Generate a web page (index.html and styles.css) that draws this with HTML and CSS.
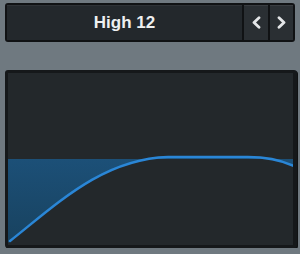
FILE: index.html
```html
<!DOCTYPE html>
<html lang="en">
  <head>
    <meta charset="UTF-8" />
    <title>EQ Band</title>
    <link rel="stylesheet" href="styles.css">
  </head>
  <body>
    <div class="bar">
      <div class="name">High 12</div>
      <button class="nav">
        <svg width="9" height="13" viewBox="0 0 9 13"><polyline points="7,1.8 2,6.5 7,11.2" /></svg>
      </button>
      <button class="nav">
        <svg width="9" height="13" viewBox="0 0 9 13"><polyline points="2,1.8 7,6.5 2,11.2" /></svg>
      </button>
    </div>

    <div class="graph">
      <svg class="curve" width="285" height="172" viewBox="0 0 285 172">
        <defs>
          <linearGradient id="fill" x1="0" y1="0" x2="0" y2="1">
            <stop offset="0" stop-color="#1c5078" />
            <stop offset="1" stop-color="#18425f" />
          </linearGradient>
        </defs>
        <!-- area between response and 0 dB line -->
        <path class="area" d="M0,86 L0,170 L2,168 C50,130 95,86 160,84 L240,84 C262,84 275,88 285,93 L285,86 Z" />
        <path class="line" d="M2,168 C50,130 95,86 160,84 L240,84 C262,84 275,88 286,93" />
      </svg>
    </div>
  </body>
</html>
```

FILE: styles.css
```css
* {
  margin: 0;
  padding: 0;
  box-sizing: border-box;
}

body {
  background: #6f7980;
  padding: 3px 4px 0 5px;
  font-family: "Liberation Sans", Arial, sans-serif;
}

.bar {
  display: flex;
  gap: 2px;
  width: 290px;
  height: 39px;
  border: 2px solid #101214;
  background: #101214;
  border-radius: 3px;
}

.name {
  flex: 1;
  display: flex;
  align-items: center;
  justify-content: center;
  background: #23282c;
  box-shadow: inset 0 1px 0 rgba(255, 255, 255, 0.05);
  color: #eef0f1;
  font-weight: bold;
  font-size: 17px;
}

.nav {
  display: flex;
  align-items: center;
  justify-content: center;
  width: 24px;
  border: none;
  background: #2a2f33;
  box-shadow: inset 0 1px 0 rgba(255, 255, 255, 0.07);
}

.nav:last-child {
  width: 23px;
}

.nav polyline {
  fill: none;
  stroke: #e4e6e8;
  stroke-width: 2.8;
  stroke-linecap: round;
  stroke-linejoin: round;
}

.graph {
  margin-top: 28px;
  width: 292px;
  height: 178px;
  border: 3px solid #15181a;
  border-right-width: 4px;
  border-radius: 3px;
  background: #23282b;
  box-shadow: 1px 1px 0 #0f1112;
}

.curve {
  display: block;
}

.area {
  fill: url(#fill);
}

.line {
  fill: none;
  stroke: #2a86d6;
  stroke-width: 2.5;
  stroke-linecap: round;
}
```
